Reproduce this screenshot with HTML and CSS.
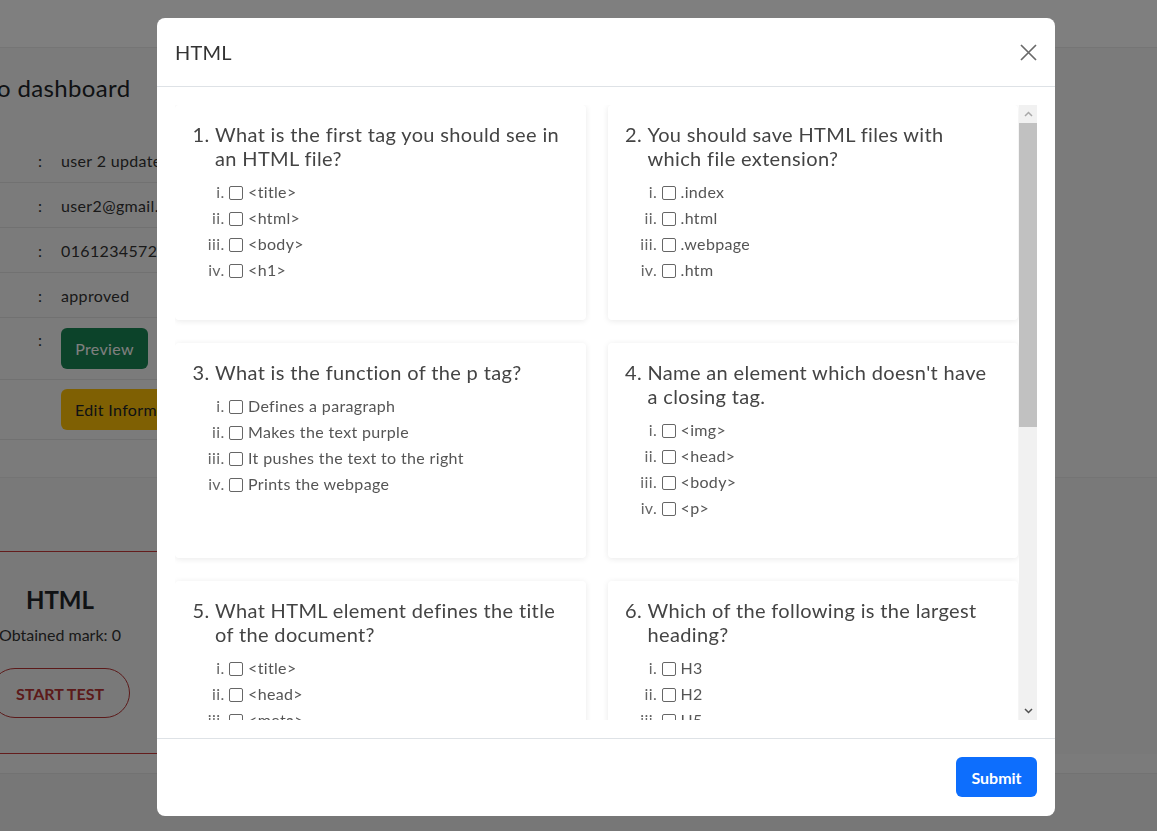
FILE: index.html
```html
<!DOCTYPE html>
<html lang="en">
<head>
<meta charset="utf-8">
<title>Dashboard - HTML test</title>
<link rel="stylesheet" href="styles.css">
</head>
<body>
<div class="page">
  <header class="navbar"></header>
  <main class="main">
    <section class="profile">
      <h2 class="dash-title">o dashboard</h2>
      <div class="info">
        <div class="info-row"><span class="colon">:</span><span class="val">user 2 updated</span></div>
        <div class="info-row"><span class="colon">:</span><span class="val">user2@gmail.com</span></div>
        <div class="info-row"><span class="colon">:</span><span class="val">01612345728</span></div>
        <div class="info-row"><span class="colon">:</span><span class="val">approved</span></div>
        <div class="info-row info-row-btn"><span class="colon">:</span><span class="val"><button class="btn-preview">Preview</button></span></div>
        <div class="info-row info-row-btn"><span class="colon"></span><span class="val"><button class="btn-edit">Edit Information</button></span></div>
      </div>
    </section>
    <section class="tests">
      <div class="test-card">
        <h3 class="test-name">HTML</h3>
        <p class="test-mark">Obtained mark: 0</p>
        <button class="btn-start">START TEST</button>
      </div>
    </section>
  </main>
  <footer class="page-foot"></footer>
</div>

<div class="overlay">
  <div class="modal">
    <div class="modal-header">
      <h5 class="modal-title">HTML</h5>
      <button class="btn-close" aria-label="Close">
        <svg width="17" height="17" viewBox="0 0 17 17"><path d="M1 1L16 16M16 1L1 16" stroke="#6a6a6a" stroke-width="1.7" fill="none"/></svg>
      </button>
    </div>
    <div class="modal-body">
      <div class="qscroll">
        <div class="qgrid">
          <div class="qcard"><ol class="q" start="1"><li class="q-item">What is the first tag you should see in an HTML file?
            <ol class="opts">
              <li><input type="checkbox" class="cb"><span>&lt;title&gt;</span></li>
              <li><input type="checkbox" class="cb"><span>&lt;html&gt;</span></li>
              <li><input type="checkbox" class="cb"><span>&lt;body&gt;</span></li>
              <li><input type="checkbox" class="cb"><span>&lt;h1&gt;</span></li>
            </ol></li></ol></div>
          <div class="qcard"><ol class="q" start="2"><li class="q-item">You should save HTML files with which file extension?
            <ol class="opts">
              <li><input type="checkbox" class="cb"><span>.index</span></li>
              <li><input type="checkbox" class="cb"><span>.html</span></li>
              <li><input type="checkbox" class="cb"><span>.webpage</span></li>
              <li><input type="checkbox" class="cb"><span>.htm</span></li>
            </ol></li></ol></div>
          <div class="qcard"><ol class="q" start="3"><li class="q-item">What is the function of the p tag?
            <ol class="opts">
              <li><input type="checkbox" class="cb"><span>Defines a paragraph</span></li>
              <li><input type="checkbox" class="cb"><span>Makes the text purple</span></li>
              <li><input type="checkbox" class="cb"><span>It pushes the text to the right</span></li>
              <li><input type="checkbox" class="cb"><span>Prints the webpage</span></li>
            </ol></li></ol></div>
          <div class="qcard"><ol class="q" start="4"><li class="q-item">Name an element which doesn't have a closing tag.
            <ol class="opts">
              <li><input type="checkbox" class="cb"><span>&lt;img&gt;</span></li>
              <li><input type="checkbox" class="cb"><span>&lt;head&gt;</span></li>
              <li><input type="checkbox" class="cb"><span>&lt;body&gt;</span></li>
              <li><input type="checkbox" class="cb"><span>&lt;p&gt;</span></li>
            </ol></li></ol></div>
          <div class="qcard"><ol class="q" start="5"><li class="q-item">What HTML element defines the title of the document?
            <ol class="opts">
              <li><input type="checkbox" class="cb"><span>&lt;title&gt;</span></li>
              <li><input type="checkbox" class="cb"><span>&lt;head&gt;</span></li>
              <li><input type="checkbox" class="cb"><span>&lt;meta&gt;</span></li>
              <li><input type="checkbox" class="cb"><span>&lt;body&gt;</span></li>
            </ol></li></ol></div>
          <div class="qcard"><ol class="q" start="6"><li class="q-item">Which of the following is the largest heading?
            <ol class="opts">
              <li><input type="checkbox" class="cb"><span>H3</span></li>
              <li><input type="checkbox" class="cb"><span>H2</span></li>
              <li><input type="checkbox" class="cb"><span>H5</span></li>
              <li><input type="checkbox" class="cb"><span>H1</span></li>
            </ol></li></ol></div>
          <div class="qcard"><ol class="q" start="7"><li class="q-item">Which tag is used to create a hyperlink?
            <ol class="opts">
              <li><input type="checkbox" class="cb"><span>&lt;link&gt;</span></li>
              <li><input type="checkbox" class="cb"><span>&lt;a&gt;</span></li>
              <li><input type="checkbox" class="cb"><span>&lt;href&gt;</span></li>
              <li><input type="checkbox" class="cb"><span>&lt;nav&gt;</span></li>
            </ol></li></ol></div>
          <div class="qcard"><ol class="q" start="8"><li class="q-item">Which attribute gives alternate text for an image?
            <ol class="opts">
              <li><input type="checkbox" class="cb"><span>title</span></li>
              <li><input type="checkbox" class="cb"><span>src</span></li>
              <li><input type="checkbox" class="cb"><span>alt</span></li>
              <li><input type="checkbox" class="cb"><span>longdesc</span></li>
            </ol></li></ol></div>
          <div class="qcard"><ol class="q" start="9"><li class="q-item">Which tag creates an unordered list?
            <ol class="opts">
              <li><input type="checkbox" class="cb"><span>&lt;ol&gt;</span></li>
              <li><input type="checkbox" class="cb"><span>&lt;li&gt;</span></li>
              <li><input type="checkbox" class="cb"><span>&lt;ul&gt;</span></li>
              <li><input type="checkbox" class="cb"><span>&lt;dl&gt;</span></li>
            </ol></li></ol></div>
          <div class="qcard"><ol class="q" start="10"><li class="q-item">Which tag inserts a line break?
            <ol class="opts">
              <li><input type="checkbox" class="cb"><span>&lt;lb&gt;</span></li>
              <li><input type="checkbox" class="cb"><span>&lt;break&gt;</span></li>
              <li><input type="checkbox" class="cb"><span>&lt;br&gt;</span></li>
              <li><input type="checkbox" class="cb"><span>&lt;hr&gt;</span></li>
            </ol></li></ol></div>
        </div>
      </div>
      <div class="scrollbar" aria-hidden="true">
        <div class="sb-btn"><svg width="9" height="6" viewBox="0 0 9 6"><path d="M1 5L4.5 1.5L8 5" stroke="#a8a8a8" stroke-width="1.5" fill="none"/></svg></div>
        <div class="sb-track"><div class="sb-thumb"></div></div>
        <div class="sb-btn"><svg width="9" height="6" viewBox="0 0 9 6"><path d="M1 1L4.5 4.5L8 1" stroke="#505050" stroke-width="1.5" fill="none"/></svg></div>
      </div>
    </div>
    <div class="modal-footer">
      <button class="btn-submit">Submit</button>
    </div>
  </div>
</div>
</body>
</html>
```

FILE: styles.css
```css
* { box-sizing: border-box; }
html, body { margin: 0; padding: 0; }
body {
  font-family: Lato, "Noto Sans", "Liberation Sans", sans-serif;
  letter-spacing: 0.35px;
  background: #f6f6f6;
  color: #212529;
  width: 1157px;
  height: 831px;
  overflow: hidden;
}
button { font-family: inherit; letter-spacing: inherit; }

/* background page */
.page { display: flex; flex-direction: column; height: 831px; }
.navbar { height: 48px; background: #ffffff; border-bottom: 1px solid #ebebeb; flex: none; }
.main { flex: 1; display: flex; flex-direction: column; }
.profile { padding-bottom: 37px; border-bottom: 1px solid #e8e8e8; background: #f7f7f7; }
.dash-title { margin: 24px 0 0 -3px; font-size: 24px; line-height: 32px; font-weight: 400; color: #212529; }
.info { margin-top: 34px; width: 200px; }
.info-row { display: flex; height: 45px; align-items: center; border-bottom: 1px solid #e2e2e2; font-size: 16px; color: #333; }
.info-row .colon { width: 61px; padding-left: 38px; flex: none; }
.info-row .val { white-space: nowrap; }
.info-row-btn { height: 62px; align-items: flex-start; padding-top: 10px; }
.info-row-btn .colon { padding-top: 2px; }
.info-row-btn:last-child { height: 60px; padding-top: 9px; border-bottom: 1px solid #e2e2e2; }
.btn-preview { background: #198754; color: #fff; border: 0; border-radius: 6px; height: 41px; width: 87px; font-size: 16px; }
.btn-edit { background: #ffc107; color: #212529; border: 0; border-radius: 6px; height: 41px; padding: 0 14px; font-size: 16px; white-space: nowrap; }

.tests { padding-top: 73px; background: #f3f3f3; }
.test-card {
  width: 240px; margin-left: -60px;
  border-top: 1px solid #c93a3a; border-bottom: 1px solid #c93a3a;
  padding: 32px 0 35px;
  display: flex; flex-direction: column; align-items: center;
}
.test-name { margin: 0; font-size: 24px; line-height: 32px; font-weight: 700; color: #212529; letter-spacing: 0; }
.test-mark { margin: 7px 0 0; font-size: 16px; line-height: 24px; color: #333; letter-spacing: 0; }
.btn-start {
  margin-top: 21px; width: 140px; height: 50px;
  background: transparent; border: 1px solid #b83434; border-radius: 25px;
  color: #b83434; font-size: 16px; font-weight: 700; letter-spacing: 0;
}
.page-foot { height: 58px; flex: none; background: #eeeeee; border-top: 1px solid #e4e4e4; margin-top: 19px; }

/* overlay + modal */
.overlay {
  position: fixed; inset: 0;
  background: rgba(0, 0, 0, 0.5);
  display: flex; align-items: flex-start;
  padding: 18px 0 0 157px;
}
.modal {
  width: 898px; height: 798px;
  background: #fff;
  border-radius: 8px;
  display: flex; flex-direction: column;
  overflow: hidden;
}
.modal-header {
  display: flex; align-items: center; justify-content: space-between;
  padding: 19px 18px 19px 18px;
  border-bottom: 1px solid #dee2e6;
  flex: none;
}
.modal-title { margin: 0; font-size: 20px; line-height: 30px; font-weight: 400; color: #333; letter-spacing: 0.2px; }
.btn-close { width: 17px; height: 17px; padding: 0; border: 0; background: transparent; display: flex; }

.modal-body { flex: 1; padding: 18px; min-height: 0; display: flex; }
.qscroll { flex: 1; min-width: 0; overflow: hidden; }

.scrollbar { width: 18px; flex: none; display: flex; flex-direction: column; background: #f1f1f1; }
.sb-btn { height: 18px; flex: none; display: flex; align-items: center; justify-content: center; }
.sb-track { flex: 1; }
.sb-thumb { height: 304px; background: #c1c1c1; }

.qgrid {
  display: grid;
  grid-template-columns: 1fr 1fr;
  column-gap: 22px;
  row-gap: 23px;
  padding: 0 1px 2px 0;
}
.qcard {
  background: #fff;
  border-radius: 4px;
  box-shadow: 0 1px 6px rgba(0, 0, 0, 0.09);
  padding: 17px 22px 37px 8px;
}
.q { margin: 0; padding-left: 32px; }
.q-item { font-size: 20px; line-height: 24px; color: #444; }
.q-item::marker { color: #444; }
.opts { list-style: lower-roman; margin: 9px 0 0; padding-left: 14px; }
.opts li { font-size: 16px; line-height: 26px; color: #555; }
.opts li::marker { color: #666; }
.cb {
  appearance: none; -webkit-appearance: none;
  width: 14px; height: 14px; margin: 0 5px 0 0;
  border: 1.5px solid #666; border-radius: 2px; background: #fff;
  vertical-align: -2px;
}

.modal-footer {
  flex: none;
  border-top: 1px solid #dee2e6;
  padding: 18px 18px 19px;
  display: flex; justify-content: flex-end;
}
.btn-submit {
  height: 40px; padding: 0 15px; min-width: 81px;
  background: #0d6efd; color: #fff; border: 0; border-radius: 6px;
  font-size: 16px; font-weight: 700; letter-spacing: 0;
}
```
